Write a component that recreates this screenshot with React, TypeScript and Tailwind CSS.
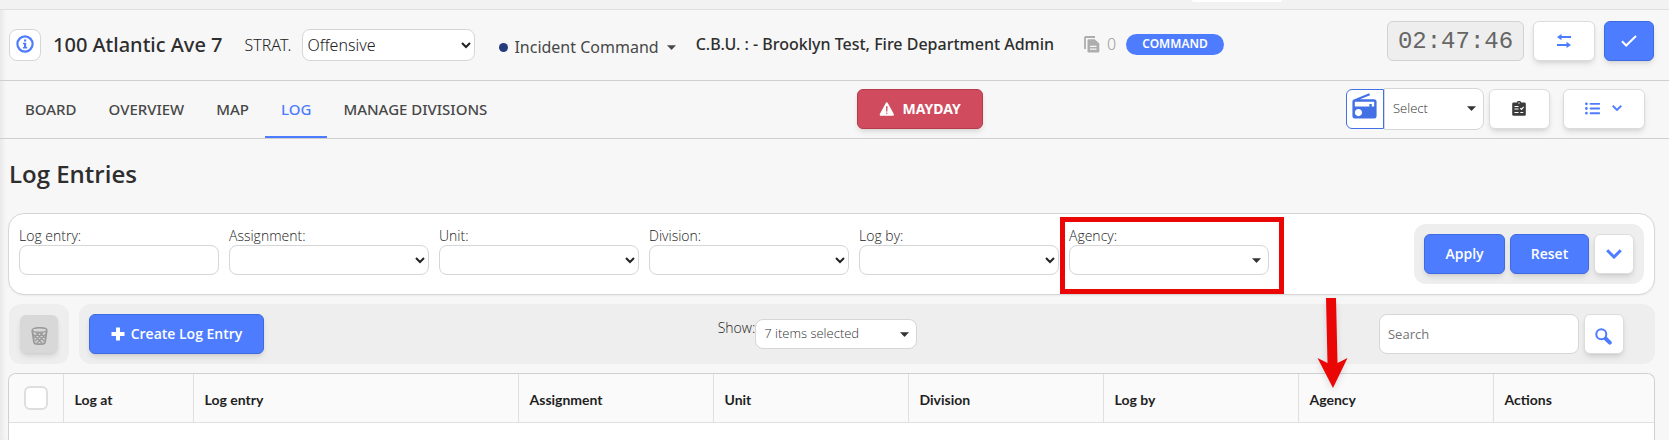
import React, { useState } from "react";
import { MdRadio } from "react-icons/md";
import { IoWarning } from "react-icons/io5";
import { FaListUl } from "react-icons/fa";

const tabs = ["BOARD", "OVERVIEW", "MAP", "LOG", "MANAGE DIVISIONS"];

const columns = [
  { label: "Log at", width: "w-[130px]" },
  { label: "Log entry", width: "w-[325px]" },
  { label: "Assignment", width: "w-[195px]" },
  { label: "Unit", width: "w-[195px]" },
  { label: "Division", width: "w-[195px]" },
  { label: "Log by", width: "w-[195px]" },
  { label: "Agency", width: "w-[195px]" },
  { label: "Actions", width: "" },
];

const filterSelects = [
  { id: "assignment", label: "Assignment:" },
  { id: "unit", label: "Unit:" },
  { id: "division", label: "Division:" },
  { id: "log-by", label: "Log by:" },
];

const fieldClass = "rounded-lg border border-[#d6d6d6] bg-white";
const whiteButton =
  "flex h-10 items-center justify-center rounded-md border border-[#dcdcdc] bg-white text-[#4d7cff] shadow-md";
const blueButton =
  "flex h-10 items-center justify-center rounded-md border border-[#3f6ae0] bg-[#4d7cff] text-sm font-semibold text-white shadow-md";

const Caret = ({ className = "" }: { className?: string }) => (
  <svg className={className} width="9" height="5" viewBox="0 0 8 4" fill="currentColor" aria-hidden="true">
    <path d="M0 0h8L4.400 3.800a.6.6 0 0 1-.8 0z" />
  </svg>
);

const InfoIcon = () => (
  <svg width="18" height="18" viewBox="0 0 18 18" fill="none" aria-hidden="true">
    <circle cx="9" cy="9" r="7.600" stroke="currentColor" strokeWidth="2.200" />
    <path d="M8 4.600h2.200v2H8zM7 7.800h3.200v4.300h1v1.500H7v-1.500h1V9.300H7z" fill="currentColor" />
  </svg>
);

const CopyIcon = () => (
  <svg width="16" height="17" viewBox="0 0 16 17" fill="none" aria-hidden="true">
    <path d="M1 13V1.8A.8.8 0 0 1 1.8 1H11" stroke="#adadad" strokeWidth="1.8" />
    <path d="M4.5 3.2h6.2l4.6 4.4v8a1 1 0 0 1-1 1H4.5a1 1 0 0 1-1-1V4.2a1 1 0 0 1 1-1z" fill="#adadad" />
    <path d="M6 10.3h6.5M6 13.2h6.5" stroke="#f7f7f7" strokeWidth="1.2" />
  </svg>
);

const SwapIcon = () => (
  <svg width="16" height="14" viewBox="0 0 16 14" fill="currentColor" aria-hidden="true">
    <path d="M5.5 0v2.1H15v2H5.5V6.2L1 3.1z" />
    <path d="M10.5 7.8v2.1H1v2h9.5V14L15 10.9z" />
  </svg>
);

const CheckIcon = () => (
  <svg width="16" height="12" viewBox="0 0 16 12" fill="none" stroke="currentColor" strokeWidth="2" aria-hidden="true">
    <path d="M1 6.2 5.2 10.5 15 1" />
  </svg>
);

const PlusIcon = () => (
  <svg width="14" height="14" viewBox="0 0 14 14" stroke="currentColor" strokeWidth="4" aria-hidden="true">
    <path d="M7 .5v13M.5 7h13" />
  </svg>
);

const ClipboardIcon = () => (
  <svg width="14" height="15" viewBox="0 0 14 15" aria-hidden="true">
    <path
      d="M1.5 1.6h3.2a2.4 2.4 0 0 1 4.6 0h3.2A1.3 1.3 0 0 1 13.800 2.900v10.600a1.300 1.300 0 0 1-1.300 1.300h-11A1.300 1.300 0 0 1 .2 13.500V2.900A1.300 1.300 0 0 1 1.500 1.600z"
      fill="#3b3b3b"
    />
    <circle cx="7" cy="2" r=".7" fill="#fff" />
    <path d="M2.500 5.500h4M2.500 8h4M2.500 11.500h4M8.300 11.500h3M8.300 7.200l1.200 1.200 2.200-2.500" stroke="#fff" strokeWidth="1.100" fill="none" />
  </svg>
);

const ChevronIcon = ({ width }: { width: number }) => (
  <svg width={width} viewBox="0 0 16 10" fill="none" stroke="currentColor" strokeWidth="3" aria-hidden="true">
    <path d="M1.200 1.200 8 8l6.800-6.800" />
  </svg>
);

const BasketIcon = () => (
  <svg width="17" height="18" viewBox="0 0 17 18" fill="none" stroke="#9b9b9b" aria-hidden="true">
    <ellipse cx="8.500" cy="3" rx="7.300" ry="2.300" strokeWidth="1.500" />
    <path d="M1.200 3.500 3 15.200c.3 1.300 2.500 2 5.500 2s5.200-.7 5.500-2l1.800-11.700" strokeWidth="1.800" />
    <path d="M2 7l9 9M5 6l8 8M9 6l5 5M15 7l-9 9M12 6l-8 8M8 6l-5 5" strokeWidth="1.500" />
  </svg>
);

const SearchIcon = () => (
  <svg width="17" height="17" viewBox="0 0 17 17" fill="none" stroke="currentColor" aria-hidden="true">
    <circle cx="6.300" cy="6.300" r="5" strokeWidth="2" />
    <path d="M10.800 10.800l4 3.800" strokeWidth="4" strokeLinecap="round" />
  </svg>
);

const Header: React.FC = () => (
  <header className="flex h-[71px] items-start border-b border-[#cfcfcf] pl-[9px] pr-[15px] pt-[11px] font-['Noto_Sans',sans-serif]">
    <div className="flex h-10 flex-1 items-center">
      <div className="flex items-center pt-2">
        <button
          aria-label="Incident info"
          className="flex size-8 items-center justify-center rounded-lg border border-[#d6d6d6] bg-white pb-0.5 text-[#4d7cff]"
        >
          <InfoIcon />
        </button>
        <h1 className="ml-3 text-xl font-medium text-[#2e2e2e]">100 Atlantic Ave 7</h1>
        <label htmlFor="strategy" className="ml-[22px] text-base font-light text-[#222]">
          STRAT.
        </label>
        <select id="strategy" className={`${fieldClass} ml-[11px] h-8 w-[173px] text-base font-light text-[#222]`}>
          <option>Offensive</option>
        </select>
      </div>
      <button className="ml-6 flex items-center pt-3 text-base text-[#484848]">
        <span className="mr-1.5 size-[9px] rounded-full bg-[#243c7d]" />
        Incident Command
        <Caret className="ml-2" />
      </button>
      <p className="ml-5 pt-1.5 text-base font-medium text-[#2e2e2e]">
        C.B.U. : - Brooklyn Test, Fire Department Admin
      </p>
      <div className="ml-[30px] flex items-center gap-[7px] pt-1.5 text-base font-light text-[#9b9b9b]">
        <CopyIcon />0
      </div>
      <span className="ml-2.5 mt-1.5 flex h-[21px] items-center rounded-full bg-[#4d7cff] px-4 text-xs font-semibold text-white">
        COMMAND
      </span>
    </div>
    <time className="flex h-10 w-[137px] items-center justify-center rounded-md border border-[#d2d2d2] bg-[#eee] pt-0.5 font-['Liberation_Mono',monospace] text-2xl text-[#666]">
      02:47:46
    </time>
    <button aria-label="Switch" className={`${whiteButton} ml-[9px] w-[62px]`}>
      <SwapIcon />
    </button>
    <button aria-label="Confirm" className={`${blueButton} ml-[9px] w-[50px]`}>
      <CheckIcon />
    </button>
  </header>
);

const TabBar: React.FC = () => {
  const [active, setActive] = useState("LOG");

  return (
    <div className="flex h-[58px] items-center justify-between border-b border-[#cfcfcf] pl-[9px] pr-6 font-['Noto_Sans',sans-serif]">
      <nav className="flex h-full">
        {tabs.map((tab) => (
          <button
            key={tab}
            onClick={() => setActive(tab)}
            className={`h-full border-b-2 px-4 pt-0.5 text-[15px] font-medium ${
              tab === active ? "border-b-[#4d7cff] text-[#4d7cff]" : "border-b-transparent text-[#484848]"
            }`}
          >
            {tab}
          </button>
        ))}
      </nav>
      <button className="mb-0.5 mr-2.5 flex h-10 w-[126px] items-center justify-center gap-1.5 rounded-md border border-[#b8394c] bg-[#d04b5e] text-sm font-bold text-white shadow-md">
        <IoWarning size={18} />
        MAYDAY
      </button>
      <div className="mb-0.5 flex items-center">
        <button
          aria-label="Radio"
          className="flex h-10 w-[38px] items-center justify-center rounded-l-md border border-[#4370e4] bg-white pb-1 text-[#4370e4]"
        >
          <MdRadio size={29} />
        </button>
        <div className="relative">
          <select
            aria-label="Radio channel"
            className="block h-[42px] w-[100px] appearance-none rounded-r-lg border border-[#d6d6d6] bg-white pl-2 font-['Open_Sans',sans-serif] text-[13px] font-light text-[#333]"
          >
            <option>Select</option>
          </select>
          <Caret className="pointer-events-none absolute right-2 top-[18px] text-[#333]" />
        </div>
        <button aria-label="Checklist" className={`${whiteButton} ml-[5px] w-[61px]`}>
          <ClipboardIcon />
        </button>
        <button aria-label="List options" className={`${whiteButton} ml-[13px] w-[82px] gap-3`}>
          <FaListUl size={15} />
          <ChevronIcon width={10} />
        </button>
      </div>
    </div>
  );
};

const Filters: React.FC = () => (
  <form
    className="flex items-center rounded-2xl border border-[#d6d6d6] bg-white p-2.5 shadow-xs"
    onSubmit={(e) => e.preventDefault()}
  >
    <div className="mb-1.5 flex flex-1 gap-2.5 text-sm leading-[18px] text-[#222]">
      <div className="flex w-[200px] flex-col">
        <label htmlFor="log-entry" className="font-light">
          Log entry:
        </label>
        <input id="log-entry" type="text" className={`${fieldClass} h-[30px] px-2`} />
      </div>
      {filterSelects.map((item) => (
        <div key={item.id} className="flex w-[200px] flex-col">
          <label htmlFor={item.id} className="font-light">
            {item.label}
          </label>
          <select id={item.id} className={`${fieldClass} h-[30px]`}>
            <option></option>
          </select>
        </div>
      ))}
      <div className="relative flex w-[200px] flex-col">
        <label htmlFor="agency" className="font-light">
          Agency:
        </label>
        <select id="agency" className={`${fieldClass} h-[30px] appearance-none`}>
          <option></option>
        </select>
        <Caret className="pointer-events-none absolute bottom-3 right-2 text-[#333]" />
        {/* highlight around the agency filter */}
        <div className="pointer-events-none absolute -bottom-[19px] -left-[9px] -right-[15px] -top-2.5 border-5 border-[#eb0606]" />
      </div>
    </div>
    <div className="flex gap-[5px] rounded-xl bg-[#eee] p-2.5">
      <button className={`${blueButton} w-[81px]`}>Apply</button>
      <button type="reset" className={`${blueButton} w-[79px]`}>
        Reset
      </button>
      <button type="button" aria-label="More filters" className={`${whiteButton} w-10`}>
        <ChevronIcon width={16} />
      </button>
    </div>
  </form>
);

const Toolbar: React.FC = () => (
  <div className="my-[9px] flex gap-2.5 pl-px">
    <div className="flex size-[60px] items-center justify-center rounded-xl bg-[#eee]">
      <button
        disabled
        aria-label="Delete"
        className="flex size-[38px] items-center justify-center rounded-md bg-[#d8d8d8] pt-1 shadow-md"
      >
        <BasketIcon />
      </button>
    </div>
    <div className="flex h-[60px] flex-1 items-center justify-between rounded-xl bg-[#eee] pl-2.5 pr-[31px]">
      <button className={`${blueButton} w-[175px] gap-1.5`}>
        <PlusIcon />
        Create Log Entry
      </button>
      <div className="mr-2 flex items-start">
        <label htmlFor="show" className="text-sm font-light leading-[18px] text-[#222]">
          Show:
        </label>
        <div className="relative">
          <select
            id="show"
            className={`${fieldClass} block h-[30px] w-[162px] appearance-none pl-2 text-[13px] font-light text-[#333]`}
          >
            <option>7 items selected</option>
          </select>
          <Caret className="pointer-events-none absolute right-2 top-[13px] text-[#333]" />
        </div>
      </div>
      <div className="flex gap-[5px]">
        <input
          type="search"
          aria-label="Search"
          placeholder="Search"
          className={`${fieldClass} h-10 w-[200px] px-2 text-[13px] placeholder:text-[#757575]`}
        />
        <button aria-label="Run search" className={`${whiteButton} w-10 pt-1`}>
          <SearchIcon />
        </button>
      </div>
    </div>
  </div>
);

const LogTable: React.FC = () => (
  <div className="flex-1 rounded-t-lg border border-b-0 border-[#d0d0d0] bg-white">
    <table className="w-full table-fixed border-collapse">
      <thead>
        <tr className="h-12 border-b border-[#e0e0e0] bg-[#fafafa]">
          <th className="w-[54px] rounded-tl-lg">
            <input
              type="checkbox"
              aria-label="Select all"
              className="mx-auto block size-6 appearance-none rounded-md border-2 border-[#dedede] bg-white"
            />
          </th>
          {columns.map((column) => (
            <th
              key={column.label}
              className={`${column.width} border-l border-[#e0e0e0] px-[11px] pt-1 text-left font-['Lato',sans-serif] text-sm font-bold text-[#1f1f1f] last:rounded-tr-lg`}
            >
              {column.label}
            </th>
          ))}
        </tr>
      </thead>
    </table>
  </div>
);

const App: React.FC = () => {
  return (
    <div className="bg-white pr-[3px] font-['Open_Sans',sans-serif]">
      <div className="relative flex min-h-screen flex-col bg-[#f7f7f7] shadow-[inset_6px_0_6px_-4px_rgba(0,0,0,0.08)]">
        <div className="flex h-[10px] items-start justify-end border-b border-[#e0e0e0] bg-[#f2f2f2] pr-[387px]">
          <div className="h-0.5 w-[90px] rounded-b-lg bg-white" />
        </div>
        <Header />
        <TabBar />
        <main className="flex flex-1 flex-col pl-2 pr-[14px]">
          <h2 className="flex h-[74px] items-center pb-1 pl-px text-2xl font-semibold text-[#2e2e2e]">
            Log Entries
          </h2>
          <Filters />
          <Toolbar />
          <LogTable />
        </main>
        {/* arrow down to the agency column */}
        <svg
          className="pointer-events-none absolute left-[1316px] top-[298px] drop-shadow-md"
          width="33"
          height="91"
          viewBox="0 0 33 91"
          aria-hidden="true"
        >
          <path d="M10 0h10l1.500 65L31.500 60 17 90 1.500 60 11.500 65z" fill="#eb0606" />
        </svg>
      </div>
    </div>
  );
};

export default App;
